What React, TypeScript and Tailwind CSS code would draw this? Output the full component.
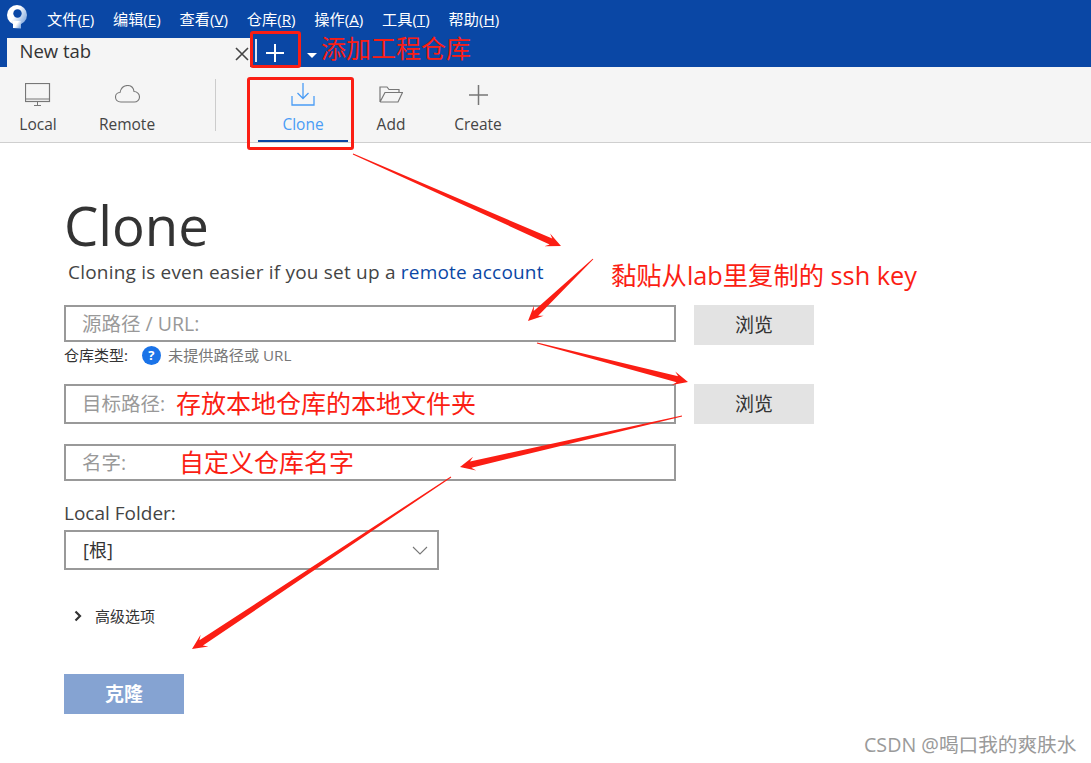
const ui = { fontFamily: '"Open Sans", "Noto Sans CJK SC", sans-serif' };

const menus = [
  ['文件(', 'F', ')'],
  ['编辑(', 'E', ')'],
  ['查看(', 'V', ')'],
  ['仓库(', 'R', ')'],
  ['操作(', 'A', ')'],
  ['工具(', 'T', ')'],
  ['帮助(', 'H', ')'],
];

// tapered screenshot-annotation arrow
const Arrow = ({ x1, y1, x2, y2 }: { x1: number; y1: number; x2: number; y2: number }) => {
  const dx = x2 - x1;
  const dy = y2 - y1;
  const len = Math.hypot(dx, dy);
  const ux = dx / len;
  const uy = dy / len;
  const nx = -uy;
  const ny = ux;
  const at = (back: number, side: number) => [x2 - ux * back + nx * side, y2 - uy * back + ny * side];
  const pts = [
    [x1 + nx * 0.5, y1 + ny * 0.5],
    at(11, 3.2),
    at(15, 7),
    [x2, y2],
    at(15, -7),
    at(11, -3.2),
    [x1 - nx * 0.5, y1 - ny * 0.5],
  ];
  return <polygon points={pts.map((p) => p.join(',')).join(' ')} fill="#fb1e14" />;
};

const Tool = ({ label, active, children, className }: { label: string; active?: boolean; children: React.ReactNode; className: string }) => (
  <div className={`flex flex-col items-center ${className}`}>
    <div className="flex h-[33px] items-end justify-center">{children}</div>
    <div className={`mt-[8px] whitespace-nowrap text-[15.5px] leading-[20px] ${active ? 'text-[#4a9cf5]' : 'text-[#444]'}`}>{label}</div>
    {active && <div className="mt-[6px] h-[2px] w-[90px] bg-[#0a47a5]" />}
  </div>
);

const Field = ({ label, h }: { label: string; h: string }) => (
  <div className={`flex w-[612px] items-center border-2 border-[#999] bg-white pl-[16px] text-[19.5px] text-[#999] ${h}`}>
    <span>{label}</span>
  </div>
);

const Browse = () => (
  <div className="ml-[18px] flex h-[40px] w-[120px] items-center justify-center bg-[#e3e3e3] text-[19px] text-[#333]">浏览</div>
);

export default function App() {
  return (
    <div style={ui} className="relative h-[763px] w-[1091px] overflow-hidden bg-white">
      <header className="h-[67px] bg-[#0a47a5]">
        <div className="flex h-[38px] items-center">
          <svg width="20" height="24" viewBox="0 0 20 24" className="ml-[7px] -mt-[5px]">
            <defs>
              <linearGradient id="logoTail" x1="0" y1="0" x2="1" y2="0.6">
                <stop offset="0.5" stopColor="#ffffff" />
                <stop offset="1" stopColor="#8fb2e2" />
              </linearGradient>
            </defs>
            <circle cx="10" cy="10" r="10" fill="url(#logoTail)" />
            <path d="M6 16 L6 23 L14 23.500 L14 16 Z" fill="url(#logoTail)" />
            <circle cx="10.500" cy="8.500" r="4.200" fill="#0a47a5" />
          </svg>
          <nav className="ml-[20px] flex gap-[18.8px] text-[15.2px] text-white">
            {menus.map(([a, k, b]) => (
              <span key={k}>
                {a}
                <span className="underline">{k}</span>
                {b}
              </span>
            ))}
          </nav>
        </div>
        <div className="flex h-[29px] items-stretch">
          <div className="ml-[7px] flex w-[243px] items-start justify-between bg-[#f5f5f5] pl-[12.500px] pr-[1px] text-[18.500px] leading-[25px] text-[#333]">
            <span>New tab</span>
            <svg width="14" height="14" viewBox="0 0 14 14" className="mt-[9px]" stroke="#444" strokeWidth="1.600">
              <path d="M1 1 L13 13 M13 1 L1 13" />
            </svg>
          </div>
          <div className="ml-[5px] mt-[1px] h-[23px] w-[2px] bg-[#dfe6f2]" />
          <svg width="18" height="18" viewBox="0 0 18 18" className="ml-[9px] mt-[6px]" stroke="#fff" strokeWidth="2">
            <path d="M9 0 V18 M0 9 H18" />
          </svg>
          <svg width="10" height="5" viewBox="0 0 10 5" className="ml-[23px] mt-[15px]">
            <path d="M0 0 H10 L5 5 Z" fill="#fff" />
          </svg>
        </div>
      </header>

      <div className="flex h-[76px] border-b border-[#cfcfcf] bg-[#f5f5f5] pt-[6px]">
        <Tool label="Local" className="ml-[19px] w-[38px]">
          <svg width="26" height="23" viewBox="0 0 26 23" fill="none" stroke="#777" strokeWidth="1">
            <rect x="0.500" y="0.500" width="24" height="18" strokeWidth="1.200" />
            <path d="M0.500 16 H24.500 M9 22.500 H16 M12.500 19 V22" />
          </svg>
        </Tool>
        <Tool label="Remote" className="ml-[41px] w-[58px]">
          <svg width="25" height="18" viewBox="0 0 25 18" fill="none" stroke="#777" strokeWidth="1.100" className="mb-[3px]">
            <path d="M6 17 C2 17 0.500 14.500 0.500 12 C0.500 9 3 7.500 5 7.500 C6 3 9 0.500 12.500 0.500 C16 0.500 18.500 3 19 6.500 C22 6.500 24.500 9 24.500 12 C24.500 15 22 17 19.500 17 Z" />
          </svg>
        </Tool>
        <div className="ml-[59px] mt-[6px] h-[52px] w-px bg-[#cccccc]" />
        <Tool label="Clone" active className="ml-[42px] w-[90px]">
          <svg width="24" height="23" viewBox="0 0 24 23" fill="none" stroke="#4a9cf5" strokeWidth="1.300">
            <path d="M12 0 V15 M6.500 10 L12 15.500 L17.500 10 M1 13 V22 H23 V13" />
          </svg>
        </Tool>
        <Tool label="Add" className="ml-[28px] w-[30px]">
          <svg width="24" height="17" viewBox="0 0 24 17" fill="none" stroke="#777" strokeWidth="1.200" className="mb-[3px]">
            <path d="M1 16 V1 H8 L10 3.500 H20 V6.500 M1 16 H19 L23.500 6.500 H6 L1 16" />
          </svg>
        </Tool>
        <Tool label="Create" className="ml-[49px] w-[46px]">
          <svg width="19" height="20" viewBox="0 0 19 20" stroke="#777" strokeWidth="1.500" className="mb-[1px]">
            <path d="M9.500 0 V20 M0 10 H19" />
          </svg>
        </Tool>
      </div>

      <main className="pl-[64px] pt-[46px]">
        <h1 className="text-[54.500px] leading-[72px] text-[#333]">Clone</h1>
        <p className="ml-[4px] -mt-[1px] text-[19px] leading-[24px] tracking-[0.2px] text-[#444]">
          Cloning is even easier if you set up a <span className="text-[#0a47a5]">remote account</span>
        </p>
        <div className="mt-[21px] flex items-start">
          <Field label="源路径 / URL:" h="h-[37px]" />
          <Browse />
        </div>
        <div className="flex h-[21px] items-center text-[15px]">
          <span className="text-[#333]">仓库类型:</span>
          <span className="ml-[14px] flex h-[19px] w-[19px] items-center justify-center rounded-full bg-[#1a73e8] text-[13px] font-bold text-white">?</span>
          <span className="ml-[7px] text-[15.2px] text-[#777]">未提供路径或 URL</span>
        </div>
        <div className="mt-[18px] flex items-start">
          <Field label="目标路径:" h="h-[40px]" />
          <Browse />
        </div>
        <div className="mt-[20px]">
          <Field label="名字:" h="h-[37px]" />
        </div>
        <div className="mt-[20px] text-[19px] leading-[24px] text-[#444]">Local Folder:</div>
        <div className="mt-[5px] flex h-[40px] w-[375px] items-center justify-between border-2 border-[#999] pl-[17px] pr-[9px] text-[18px] text-[#333]">
          <span>[根]</span>
          <svg width="16" height="9" viewBox="0 0 16 9" fill="none" stroke="#777" strokeWidth="1.100">
            <path d="M1 1 L8 8 L15 1" />
          </svg>
        </div>
        <div className="mt-[36px] flex h-[20px] items-center pl-[10px] text-[15px] text-[#333]">
          <svg width="8" height="12" viewBox="0 0 8 12" fill="none" stroke="#333" strokeWidth="2.200">
            <path d="M1.500 1.500 L6 6 L1.500 10.500" />
          </svg>
          <span className="ml-[13px]">高级选项</span>
        </div>
        <button className="mt-[48px] h-[40px] w-[120px] bg-[#85a3d2] text-[19px] font-bold text-white">克隆</button>
      </main>

      {/* annotations drawn on top of the screenshot */}
      <div className="absolute left-[250px] top-[31px] h-[37px] w-[51px] rounded-[3px] border-[3px] border-[#fb1e14]" />
      <div className="absolute left-[247px] top-[77px] h-[73px] w-[107px] rounded-[3px] border-[3px] border-[#fb1e14]" />
      <span className="absolute left-[321px] top-[30px] text-[25px] leading-[36px] text-[#fb1e14]">添加工程仓库</span>
      <span className="absolute left-[611px] top-[257px] text-[25.300px] leading-[36px] text-[#fb1e14]">黏贴从lab里复制的 ssh key</span>
      <span className="absolute left-[176px] top-[385px] text-[25px] leading-[36px] text-[#fb1e14]">存放本地仓库的本地文件夹</span>
      <span className="absolute left-[179px] top-[444px] text-[25px] leading-[36px] text-[#fb1e14]">自定义仓库名字</span>
      <span className="absolute left-[864px] top-[730px] text-[19.650px] leading-[30px] text-[#9a9a9a]">CSDN @喝口我的爽肤水</span>
      <svg width="1091" height="763" className="pointer-events-none absolute left-0 top-0">
        <Arrow x1={353} y1={154} x2={561} y2={246} />
        <Arrow x1={593} y1={259} x2={528} y2={321} />
        <Arrow x1={537} y1={343} x2={688} y2={382} />
        <Arrow x1={682} y1={416} x2={460} y2={467} />
        <Arrow x1={451} y1={477} x2={192} y2={649} />
      </svg>
    </div>
  );
}
